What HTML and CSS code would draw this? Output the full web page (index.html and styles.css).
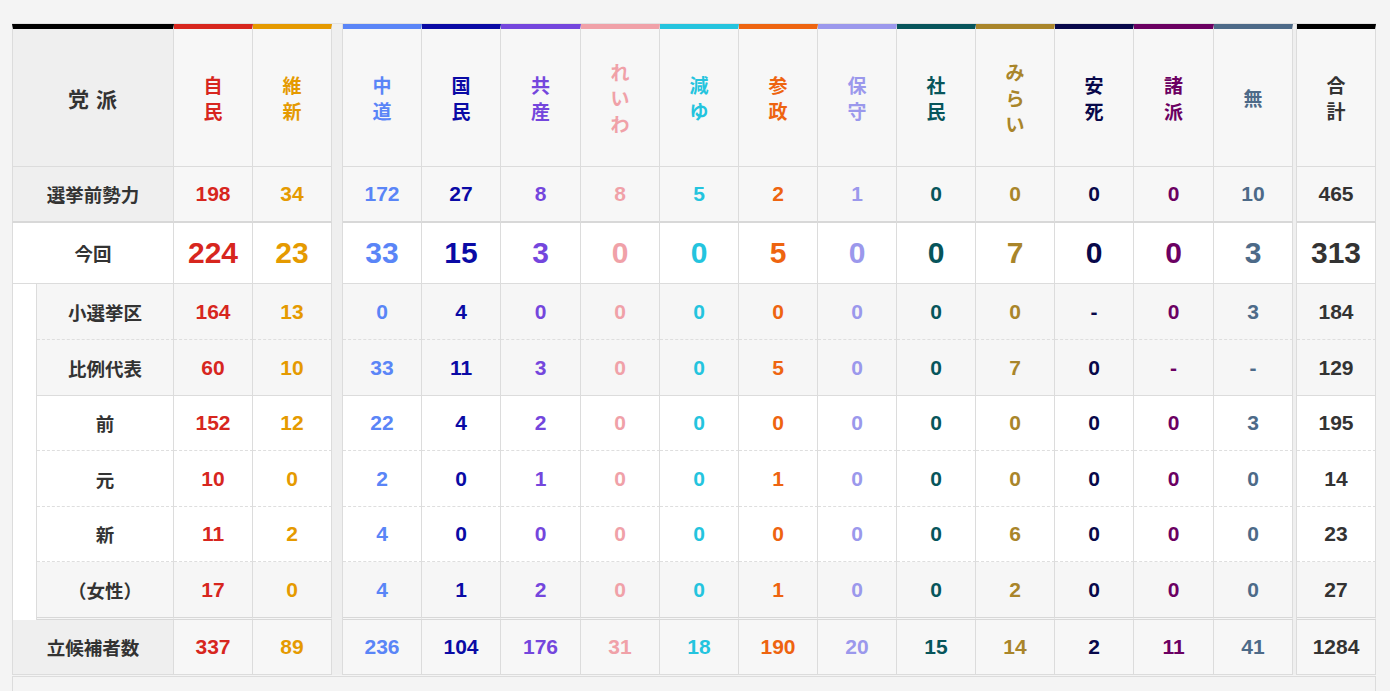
FILE: index.html
```html
<!DOCTYPE html>
<html lang="ja">
<head>
<meta charset="utf-8">
<title>党派別 当選者数</title>
<link rel="stylesheet" href="styles.css">
</head>
<body>
<div class="wrap">
<table class="seats">
<colgroup>
<col class="c-ind"><col class="c-lab">
<col class="c-p"><col class="c-p">
<col class="c-sep">
<col class="c-p"><col class="c-p"><col class="c-p80"><col class="c-p"><col class="c-p"><col class="c-p"><col class="c-p"><col class="c-p"><col class="c-p"><col class="c-p"><col class="c-p80"><col class="c-p">
<col class="c-sep2">
<col class="c-p">
</colgroup>
<tr class="head">
<th colspan="2" class="hlab">党&nbsp;派</th>
<th class="ph a"><span>自</span><span>民</span></th>
<th class="ph b"><span>維</span><span>新</span></th>
<td class="sep" rowspan="10"></td>
<th class="ph c"><span>中</span><span>道</span></th>
<th class="ph d"><span>国</span><span>民</span></th>
<th class="ph e"><span>共</span><span>産</span></th>
<th class="ph f"><span>れ</span><span>い</span><span>わ</span></th>
<th class="ph g"><span>減</span><span>ゆ</span></th>
<th class="ph h"><span>参</span><span>政</span></th>
<th class="ph i"><span>保</span><span>守</span></th>
<th class="ph j"><span>社</span><span>民</span></th>
<th class="ph k"><span>み</span><span>ら</span><span>い</span></th>
<th class="ph l"><span>安</span><span>死</span></th>
<th class="ph m"><span>諸</span><span>派</span></th>
<th class="ph o"><span>無</span></th>
<td class="sep2" rowspan="10"></td>
<th class="ph t"><span>合</span><span>計</span></th>
</tr>
<tr class="pre">
<th colspan="2" class="lab">選挙前勢力</th>
<td class="a">198</td><td class="b">34</td>
<td class="c">172</td><td class="d">27</td><td class="e">8</td><td class="f">8</td><td class="g">5</td><td class="h">2</td><td class="i">1</td><td class="j">0</td><td class="k">0</td><td class="l">0</td><td class="m">0</td><td class="o">10</td>
<td class="t">465</td>
</tr>
<tr class="now">
<th colspan="2" class="lab">今回</th>
<td class="a">224</td><td class="b">23</td>
<td class="c">33</td><td class="d">15</td><td class="e">3</td><td class="f">0</td><td class="g">0</td><td class="h">5</td><td class="i">0</td><td class="j">0</td><td class="k">7</td><td class="l">0</td><td class="m">0</td><td class="o">3</td>
<td class="t">313</td>
</tr>
<tr class="sub gray dash r56">
<td class="ind" rowspan="6"></td>
<th class="slab">小選挙区</th>
<td class="a">164</td><td class="b">13</td>
<td class="c">0</td><td class="d">4</td><td class="e">0</td><td class="f">0</td><td class="g">0</td><td class="h">0</td><td class="i">0</td><td class="j">0</td><td class="k">0</td><td class="l">-</td><td class="m">0</td><td class="o">3</td>
<td class="t">184</td>
</tr>
<tr class="sub gray r56">
<th class="slab">比例代表</th>
<td class="a">60</td><td class="b">10</td>
<td class="c">33</td><td class="d">11</td><td class="e">3</td><td class="f">0</td><td class="g">0</td><td class="h">5</td><td class="i">0</td><td class="j">0</td><td class="k">7</td><td class="l">0</td><td class="m">-</td><td class="o">-</td>
<td class="t">129</td>
</tr>
<tr class="sub dash r55">
<th class="slab">前</th>
<td class="a">152</td><td class="b">12</td>
<td class="c">22</td><td class="d">4</td><td class="e">2</td><td class="f">0</td><td class="g">0</td><td class="h">0</td><td class="i">0</td><td class="j">0</td><td class="k">0</td><td class="l">0</td><td class="m">0</td><td class="o">3</td>
<td class="t">195</td>
</tr>
<tr class="sub dash r56">
<th class="slab">元</th>
<td class="a">10</td><td class="b">0</td>
<td class="c">2</td><td class="d">0</td><td class="e">1</td><td class="f">0</td><td class="g">0</td><td class="h">1</td><td class="i">0</td><td class="j">0</td><td class="k">0</td><td class="l">0</td><td class="m">0</td><td class="o">0</td>
<td class="t">14</td>
</tr>
<tr class="sub dash r55">
<th class="slab">新</th>
<td class="a">11</td><td class="b">2</td>
<td class="c">4</td><td class="d">0</td><td class="e">0</td><td class="f">0</td><td class="g">0</td><td class="h">0</td><td class="i">0</td><td class="j">0</td><td class="k">6</td><td class="l">0</td><td class="m">0</td><td class="o">0</td>
<td class="t">23</td>
</tr>
<tr class="sub gray women">
<th class="slab">（女性）</th>
<td class="a">17</td><td class="b">0</td>
<td class="c">4</td><td class="d">1</td><td class="e">2</td><td class="f">0</td><td class="g">0</td><td class="h">1</td><td class="i">0</td><td class="j">0</td><td class="k">2</td><td class="l">0</td><td class="m">0</td><td class="o">0</td>
<td class="t">27</td>
</tr>
<tr class="cand">
<th colspan="2" class="lab">立候補者数</th>
<td class="a">337</td><td class="b">89</td>
<td class="c">236</td><td class="d">104</td><td class="e">176</td><td class="f">31</td><td class="g">18</td><td class="h">190</td><td class="i">20</td><td class="j">15</td><td class="k">14</td><td class="l">2</td><td class="m">11</td><td class="o">41</td>
<td class="t">1284</td>
</tr>
</table>
<div class="foot"></div>
</div>
</body>
</html>
```
FILE: styles.css
```css
* { box-sizing: border-box; }
html, body { margin: 0; padding: 0; }
body {
  background: #f4f4f4;
  font-family: "Liberation Sans", Arial, "Noto Sans CJK JP", sans-serif;
  color: #333;
}
.wrap {
  padding: 23px 0 0 12px;
  width: 1376px;
}
.seats {
  width: 1364px;
  table-layout: fixed;
  border-collapse: separate;
  border-spacing: 0;
  border-top: 1px solid #e2e2e2;
}
.c-ind { width: 25px; }
.c-lab { width: 137px; }
.c-p { width: 79px; }
.c-p80 { width: 80px; }
.c-sep { width: 11px; }
.c-sep2 { width: 4px; }

.seats th, .seats td {
  padding: 0;
  text-align: center;
  vertical-align: middle;
  border-right: 1px solid #dcdcdc;
  border-bottom: 1px solid #dcdcdc;
}
.seats td {
  font-family: "Liberation Sans", Arial, sans-serif;
  font-weight: bold;
  font-size: 21px;
  height: 56px;
}
.seats th {
  font-family: "Noto Sans CJK JP", sans-serif;
  font-weight: bold;
  color: #333;
}

/* header */
.head th, .head td { height: 143px; }
.seats .hlab {
  background: #efefef;
  border-left: 1px solid #dcdcdc;
  border-top: 5px solid #000;
  font-size: 21px;
  letter-spacing: 1px;
}
.seats .ph {
  background: #f7f7f7;
  border-top: 5px solid #000;
  font-size: 19px;
  line-height: 26px;
  font-weight: bold;
}
.ph span { display: block; }

.seats .sep, .seats .sep2 {
  background: #efefef;
  border-bottom: none;
  height: auto;
}

/* rows */
.seats .lab {
  background: #efefef;
  border-left: 1px solid #dcdcdc;
  font-size: 18.5px;
}
.pre td { background: #f7f7f7; }
.pre th, .pre td { border-bottom: 2px solid #d8d8d8; height: 56px; }

.seats .now th { background: #fff; height: 61px; }
.now td { background: #fff; font-size: 30px; height: 61px; }

.seats .sub .ind {
  background: #fff;
  border-left: 1px solid #dcdcdc;
  border-right: 1px solid #dcdcdc;
  border-bottom: none;
  height: auto;
}
.seats .slab { font-size: 18.5px; }
.sub th, .sub td { background: #fff; }
.sub.gray th, .sub.gray td { background: #f6f6f6; }
.sub.dash th, .sub.dash td { border-bottom: 1px dashed #dedede; }
.r56 th, .r56 td { height: 56px; }
.r55 th, .r55 td { height: 55px; }
.sub.women th, .sub.women td { border-bottom: 3px double #d8d8d8; height: 58px; }

.cand td, .cand th { height: 55px; }
.cand td { background: #f7f7f7; }

.foot {
  width: 1364px;
  height: 16px;
  margin-top: 1px;
  border-top: 1px solid #dcdcdc;
  border-left: 1px solid #dcdcdc;
  border-right: 1px solid #dcdcdc;
  background: #f4f4f4;
}

/* party colours */
.seats .a { color: #d7261e; border-top-color: #d7261e; }
.seats .b { color: #e59a00; border-top-color: #e59a00; }
.seats .c { color: #5a85f7; border-top-color: #5a85f7; }
.seats .d { color: #0a0aa5; border-top-color: #0a0aa5; }
.seats .e { color: #7446dd; border-top-color: #7446dd; }
.seats .f { color: #f0a1a8; border-top-color: #f0a1a8; }
.seats .g { color: #24c4de; border-top-color: #24c4de; }
.seats .h { color: #ee6410; border-top-color: #ee6410; }
.seats .i { color: #9b98ec; border-top-color: #9b98ec; }
.seats .j { color: #07555b; border-top-color: #07555b; }
.seats .k { color: #a9852a; border-top-color: #a9852a; }
.seats .l { color: #08084a; border-top-color: #08084a; }
.seats .m { color: #6b0062; border-top-color: #6b0062; }
.seats .o { color: #4d6a88; border-top-color: #4d6a88; }
.seats .t { color: #333; border-top-color: #000; }
```
